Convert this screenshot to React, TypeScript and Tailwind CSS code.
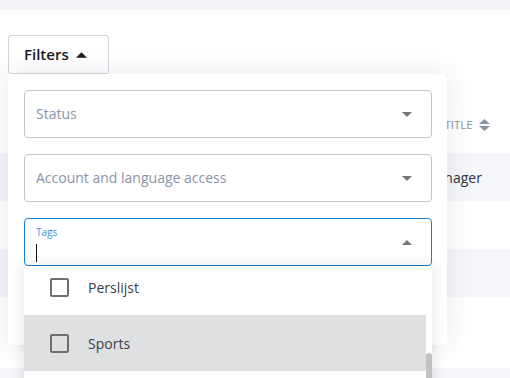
import { useState } from "react";

type Row = { title: string; striped: boolean; h: string };

const rows: Row[] = [
  { title: "Manager", striped: true, h: "h-[48px]" },
  { title: "", striped: false, h: "h-[48px]" },
  { title: "", striped: true, h: "h-[48px]" },
  { title: "", striped: false, h: "h-[71px]" },
  { title: "", striped: true, h: "h-[48px]" },
];

const tags = ["Perslijst", "Sports"];

function Caret({ up = false, className = "" }: { up?: boolean; className?: string }) {
  return (
    <svg width="10" height="5" viewBox="0 0 10 5" className={className}>
      {up ? <path d="M0 5 L5 0 L10 5 Z" fill="currentColor" /> : <path d="M0 0 L10 0 L5 5 Z" fill="currentColor" />}
    </svg>
  );
}

function SelectBox({ label }: { label: string }) {
  return (
    <div className="h-[48px] rounded-[4px] border border-[#c4c4c4] px-[11px] flex items-center justify-between">
      <span className="text-[14px] text-[#8a94a6] -mt-[1px]">{label}</span>
      <Caret className="text-[#757575] mr-[8px]" />
    </div>
  );
}

export default function App() {
  const [hover] = useState("Sports");

  return (
    <div className="w-[510px] h-[378px] relative overflow-hidden bg-white font-['Open_Sans',sans-serif]">
      <div className="h-[10px] bg-[#f2f3f7]" />

      {/* table behind the filter popover */}
      <div className="mt-[91px]">
        <div className="h-[52px] flex items-center pb-[4px]">
          <div className="w-[422px] shrink-0" />
          <div className="flex items-center gap-[6px] text-[11.5px] uppercase text-[#8b93a5]">
            <span>Job title</span>
            <svg width="11" height="12" viewBox="0 0 11 12">
              <path d="M0 5 L5.5 0 L11 5 Z" fill="#8b93a5" />
              <path d="M0 7 L11 7 L5.5 12 Z" fill="#8b93a5" />
            </svg>
          </div>
        </div>
        {rows.map((r, i) => (
          <div key={i} className={`${r.h} flex items-center ${r.striped ? "bg-[#f5f6fa]" : "bg-white"}`}>
            <div className="w-[424px] shrink-0" />
            <span className="text-[14px] text-[#2e3440] whitespace-nowrap">{r.title}</span>
          </div>
        ))}
      </div>

      {/* filters popover */}
      <div className="absolute left-[8px] top-[35px]">
        <div className="w-[101px] h-[39px] rounded-[3px] border border-[#d2d5db] bg-white flex items-center pl-[15px] gap-[7px]">
          <span className="text-[15px] font-semibold text-[#1d1d1f]">Filters</span>
          <Caret up className="text-[#1d1d1f] w-[11px] h-[6px]" />
        </div>
        <div className="relative w-[439px] h-[271px] bg-white rounded-b-[5px] rounded-tr-[5px] shadow-[0_0_28px_rgba(40,50,90,0.11)] pt-[16px] pl-[16px] pr-[15px] flex flex-col gap-[16px]">
          <SelectBox label="Status" />
          <SelectBox label="Account and language access" />
          <div className="h-[48px] rounded-[4px] border border-[#1a7fd0] px-[11px] flex justify-between">
            <div className="flex flex-col pt-[6px]">
              <span className="text-[10px] leading-[14px] text-[#3a92d8]">Tags</span>
              <span className="mt-[5px] w-[1px] h-[18px] bg-[#111]" />
            </div>
            <Caret up className="text-[#757575] mr-[8px] mt-[21px]" />
          </div>

          {/* options list */}
          <div className="absolute left-[16px] top-[192px] w-[408px] h-[140px] bg-white shadow-[0_0_14px_rgba(0,0,0,0.12)] overflow-hidden flex">
            <div className="flex-1 -mt-[7px]">
              {tags.map((t) => (
                <div
                  key={t}
                  className={`h-[56px] flex items-center pl-[26px] gap-[19px] ${t === hover ? "bg-[#dfe0e2]" : "bg-white"}`}
                >
                  <span className="w-[19px] h-[19px] rounded-[2px] border-2 border-[#6e6e6e]" />
                  <span className="text-[14px] text-[#3a3f4a]">{t}</span>
                </div>
              ))}
            </div>
            <div className="w-[6px] bg-white pt-[87px]">
              <div className="h-[60px] rounded-t-[3px] bg-[#c1c1c1]" />
            </div>
          </div>
        </div>
      </div>
    </div>
  );
}
